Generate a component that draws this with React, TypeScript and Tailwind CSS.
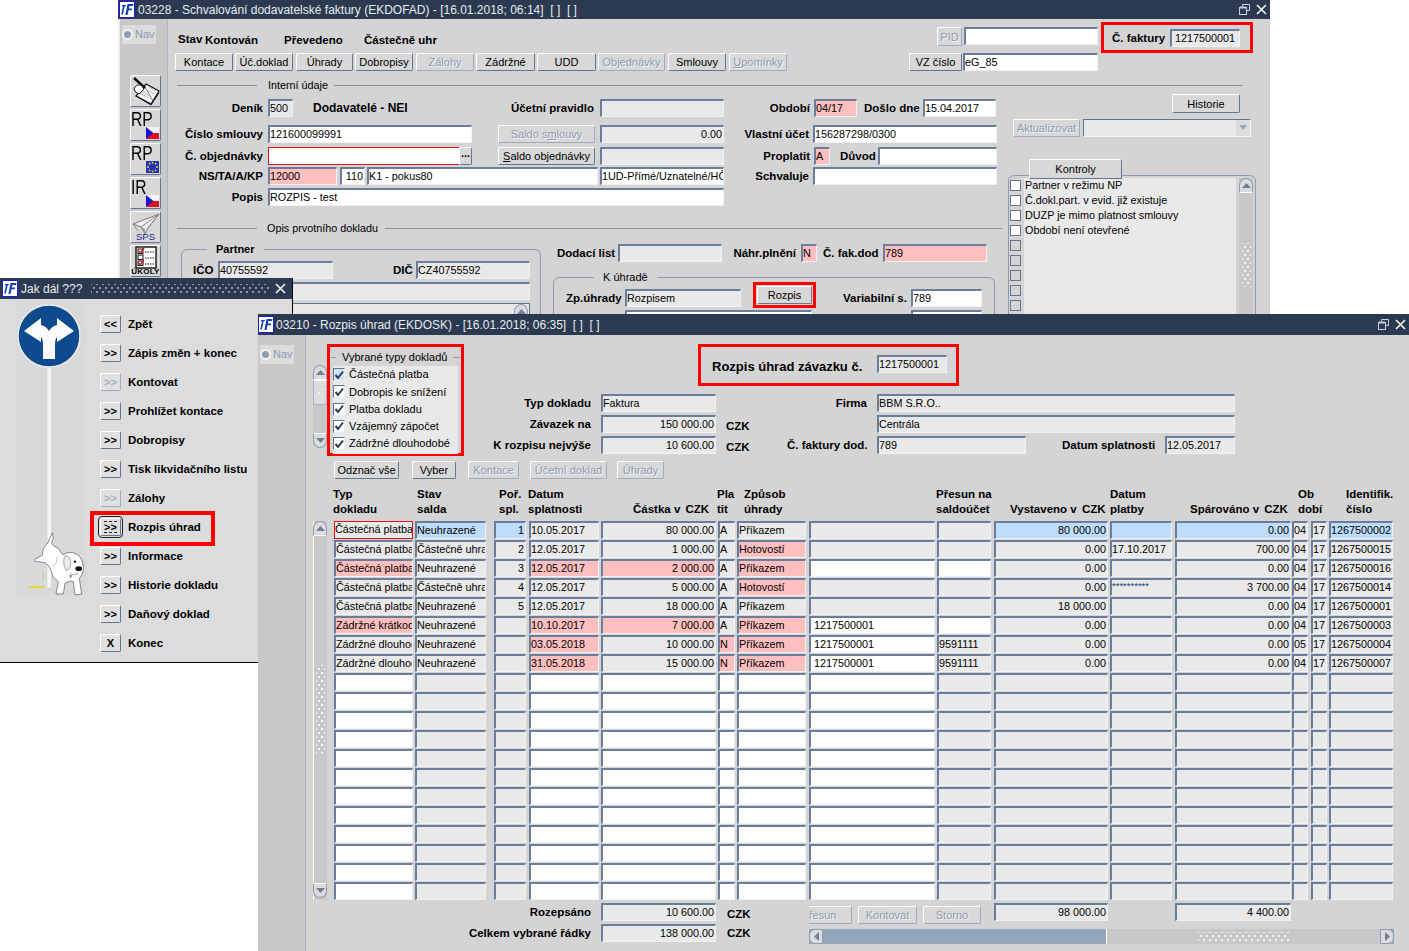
import React from "react";

const fieldBase =
  "shrink-0 h-[18px] overflow-hidden whitespace-nowrap border border-[#f2f2f2] border-t-2 border-l-2 border-t-[#6a7d9c] border-l-[#6a7d9c] pl-0 pr-[1px] text-[10.8px] leading-[15px] text-black";
const GREY = "bg-[#e9e9e9]";
const WHITE = "bg-white";
const PINK = "bg-[#ffbfbf]";
const BLUE = "bg-[#bedcfb]";

function F({ c, t, right }: { c: string; t?: string; right?: boolean }) {
  return <div className={`${fieldBase} ${c} ${right ? "text-right" : ""}`}>{t}</div>;
}

function B({ c, children, dis, h }: { c: string; children: React.ReactNode; dis?: boolean; h?: string }) {
  return (
    <div
      className={`shrink-0 ${h ?? "h-[18px]"} flex items-center justify-center overflow-hidden whitespace-nowrap rounded-[2px] border border-t-white border-l-white bg-[#d8d8d8] pt-[1px] text-[11px] ${
        dis
          ? "border-[#9fabbe] text-[#8c9bb2] [text-shadow:1px_1px_0_#f4f4f4]"
          : "border-[#66758f] text-black"
      } ${c}`}
    >
      {children}
    </div>
  );
}

function L({ c, children }: { c?: string; children: React.ReactNode }) {
  return <div className={`shrink-0 whitespace-nowrap text-[11.5px] font-bold leading-[14px] text-black ${c ?? ""}`}>{children}</div>;
}

function Logo() {
  return (
    <svg width="16" height="17" viewBox="0 0 16 17" className="shrink-0">
      <rect x="0.5" y="0.5" width="15" height="16" fill="#fff" stroke="#1c1ccc" />
      <path d="M3 4 H7 L6.7 5.2 H5.7 L3.9 13.5 H2.2 L4 5.2 H2.8Z" fill="#1a3fb0" />
      <path d="M8.5 3 H14.4 L14 5 H10.4 L9.9 7.4 H13.2 L12.8 9.3 H9.5 L8.6 14 H6.4Z" fill="#1a3fb0" />
    </svg>
  );
}

function Restore() {
  return (
    <svg width="11" height="11" viewBox="0 0 11 11" className="shrink-0">
      <path d="M3.5 2.5 V0.5 H10.5 V6.5 H8" fill="none" stroke="#c9d0da" />
      <rect x="0.5" y="3.5" width="7" height="7" fill="none" stroke="#c9d0da" />
      <path d="M1 3.5 H7" stroke="#c9d0da" strokeWidth="2" />
    </svg>
  );
}

function Close() {
  return (
    <svg width="11" height="11" viewBox="0 0 11 11" className="shrink-0">
      <path d="M1 1 L10 10 M10 1 L1 10" stroke="#eef0f3" strokeWidth="1.7" />
    </svg>
  );
}

function Nav() {
  return (
    <div className="ml-[2px] mt-[6px] flex h-[19px] w-[34px] items-center gap-[2px] bg-[#dcdcdc] text-[11px] text-[#8c9bb2]">
      <div className="h-[11px] w-[11px] shrink-0 rounded-full border-2 border-[#f2f2f2] bg-[#8e9bb0]" />
      Nav
    </div>
  );
}

function Arrow({ up, c }: { up?: boolean; c: string }) {
  return (
    <div
      className={`flex h-[15px] w-[14px] shrink-0 items-center justify-center border border-[#8d9ab0] bg-[#dcdcdc] ${
        up ? "rounded-t-[7px] border-b-white" : "rounded-b-[7px] border-t-white"
      } ${c}`}
    >
      <svg width="9" height="5" viewBox="0 0 9 5">
        <path d={up ? "M0 5 L4.5 0 L9 5Z" : "M0 0 L4.5 5 L9 0Z"} fill="#6f7f99" />
      </svg>
    </div>
  );
}

function Dots({ c }: { c: string }) {
  return (
    <div
      className={`bg-[radial-gradient(circle,#f5f5f5_0.9px,transparent_1.1px),radial-gradient(circle,#f5f5f5_0.9px,transparent_1.1px)] bg-[length:6px_8px] bg-[position:0_0,3px_4px] ${c}`}
    />
  );
}

function Flag({ eu }: { eu?: boolean }) {
  return eu ? (
    <svg width="13" height="12" viewBox="0 0 13 12" className="absolute bottom-[1px] right-[1px]">
      <rect width="13" height="12" fill="#2233bb" />
      {[[6.5, 1.7], [9.5, 2.7], [11, 6], [9.5, 9.3], [6.5, 10.3], [3.5, 9.3], [2, 6], [3.5, 2.7]].map(([x, y], i) => (
        <circle key={i} cx={x} cy={y} r="0.9" fill="#ffe000" />
      ))}
    </svg>
  ) : (
    <svg width="13" height="12" viewBox="0 0 13 12" className="absolute bottom-[1px] right-[1px]">
      <rect width="13" height="6" fill="#f4f4f4" />
      <rect y="6" width="13" height="6" fill="#e01020" />
      <path d="M0 0 L7.5 6 L0 12Z" fill="#1818d0" />
    </svg>
  );
}

function ToolBtn({ children }: { children: React.ReactNode }) {
  return (
    <div className="relative h-[32px] w-[31px] shrink-0 overflow-hidden rounded-[2px] border border-[#66758f] border-t-white border-l-white bg-[#d8d8d8]">
      {children}
    </div>
  );
}

function RPText({ t }: { t: string }) {
  return <div className="absolute left-[0px] top-[-3px] origin-left scale-x-[0.78] text-[20px] leading-[24px] text-black">{t}</div>;
}

function Toolbar() {
  return (
    <div className="ml-[10px] mt-[31px] flex flex-col gap-[2px]">
      <ToolBtn>
        <svg width="29" height="30" viewBox="0 0 29 30">
          <path d="M5 20 L15 8 L28 15 L20 28Z" fill="#f7f7f7" stroke="#111" strokeWidth="1.2" />
          <path d="M7 21 L20 29 L28 17" fill="none" stroke="#111" />
          <path d="M14 11 L22 25" stroke="#777" />
          <path d="M9 17 L17 22 M11 15 L19 20 M18 11 L25 15 M16 14 L23 18" stroke="#aaa" strokeWidth="0.8" />
          <path d="M3 2 L14 12" stroke="#111" strokeWidth="2.6" />
          <path d="M3 13 Q5 8 10 9 L13 13 L8 18 Q4 17 3 13Z" fill="#fff" stroke="#111" />
        </svg>
      </ToolBtn>
      <ToolBtn>
        <RPText t="RP" />
        <Flag />
      </ToolBtn>
      <ToolBtn>
        <RPText t="RP" />
        <Flag eu />
      </ToolBtn>
      <ToolBtn>
        <RPText t="IR" />
        <Flag />
      </ToolBtn>
      <ToolBtn>
        <svg width="29" height="23" viewBox="0 0 29 23" className="absolute left-0 top-0">
          <path d="M28 2 L2 12 L10 15 L14 22 L17 16 Z" fill="#f0f0f0" stroke="#777" />
          <path d="M28 2 L10 15 M17 16 L28 2" stroke="#888" fill="none" />
          <path d="M10 15 L14 22 L14 17Z" fill="#9a9a9a" />
          <path d="M2 12 L7 19" stroke="#888" />
        </svg>
        <div className="absolute inset-x-0 bottom-[0px] text-center text-[9.5px] leading-[10px] text-[#1a2a9a]">SPS</div>
      </ToolBtn>
      <ToolBtn>
        <svg width="29" height="23" viewBox="0 0 29 23" className="absolute left-0 top-0">
          <rect x="5" y="1" width="20" height="21" fill="#fff" stroke="#111" strokeWidth="1.4" />
          {[3, 9, 15].map((y, i) => (
            <g key={y}>
              <rect x="7" y={y} width="5" height="4.5" fill="#fff" stroke="#111" />
              {i !== 1 && <path d={`M7.5 ${y + 2} L9.5 ${y + 4} L13 ${y - 1}`} stroke="#d01020" strokeWidth="1.4" fill="none" />}
              <path d={`M14 ${y + 3} H23`} stroke="#111" strokeDasharray="1.5 1" />
            </g>
          ))}
        </svg>
        <div className="absolute inset-x-0 bottom-[-1px] text-center text-[8px] font-bold leading-[10px] tracking-[0.2px] text-black">ÚKOLY</div>
      </ToolBtn>
    </div>
  );
}

function Legend({ c, children, bold }: { c: string; children: React.ReactNode; bold?: boolean }) {
  return (
    <div className={`absolute top-[-8px] whitespace-nowrap bg-[#d4d4d4] px-[9px] text-[11px] leading-[14px] ${bold ? "font-bold" : ""} ${c}`}>
      {children}
    </div>
  );
}

function Window1() {
  const kontroly = ["Partner v režimu NP", "Č.dokl.part. v evid. již existuje", "DUZP je mimo platnost smlouvy", "Období není otevřené", "", "", "", "", "", ""];
  const btns: [string, string, boolean?][] = [
    ["w-[58px]", "Kontace"],
    ["w-[58px] ml-[2px]", "Úč.doklad"],
    ["w-[57px] ml-[3px]", "Úhrady"],
    ["w-[58px] ml-[2px]", "Dobropisy"],
    ["w-[58px] ml-[3px]", "Zálohy", true],
    ["w-[59px] ml-[2px]", "Zádržné"],
    ["w-[59px] ml-[2px]", "UDD"],
    ["w-[67px] ml-[2px]", "Objednávky", true],
    ["w-[58px] ml-[3px]", "Smlouvy"],
  ];
  return (
    <section className="absolute left-[118px] top-0 z-0 flex h-[340px] w-[1152px] flex-col overflow-hidden bg-[#d4d4d4]">
      <header className="flex h-[19px] shrink-0 items-center bg-[#2b3a50] pl-[1px] text-[12px] text-[#e8ebef]">
        <Logo />
        <div className="ml-[3px] whitespace-pre">03228 - Schvalování dodavatelské faktury (EKDOFAD) - [16.01.2018; 06:14]  [ ]  [ ]</div>
        <div className="ml-auto mr-[3px] flex items-center gap-[6px]">
          <Restore />
          <Close />
        </div>
      </header>
      <div className="flex min-h-0 flex-1">
        <aside className="w-[50px] shrink-0 border-r border-r-[#aab3c2] border-l-2 border-l-[#eeeeee] bg-[#c8c8c8]">
          <Nav />
          <Toolbar />
        </aside>
        <main className="min-w-0 flex-1">
          {/* top row */}
          <div className="mt-[3px] flex h-[31px] items-start">
            <L c="ml-[10px] mt-[10px] w-[27px]">Stav</L>
            <L c="w-[79px] mt-[11px]">Kontován</L>
            <L c="w-[80px] mt-[11px]">Převedeno</L>
            <L c="w-[573px] mt-[11px]">Částečně uhr</L>
            <B c="w-[25px] mt-[5px]" dis h="h-[19px]">PID</B>
            <F c={`w-[134px] ml-[2px] mt-[5px] ${WHITE}`} />
            <div className="ml-[3px] flex h-[31px] w-[152px] items-center border-[3px] border-[#ff0000] pl-[8px]">
              <L c="w-[58px]">Č. faktury</L>
              <F c={`w-[70px] text-center ${GREY}`} t="1217500001" />
            </div>
          </div>
          {/* button row */}
          <div className="flex h-[18px] pl-[7px]">
            {btns.map(([c, t, d]) => (
              <B key={t} c={c} dis={d}>{t}</B>
            ))}
            <B c="w-[58px] ml-[3px]" dis><span><u>U</u>pomínky</span></B>
            <B c="w-[53px] ml-[122px]">VZ číslo</B>
            <F c={`w-[135px] ml-[1px] ${WHITE}`} t="eG_85" />
          </div>
          {/* Interní údaje */}
          <div className="mt-[7px] flex h-[14px] items-center">
            <div className="ml-[9px] h-0 w-[80px] border-t border-[#8a8f98]" />
            <div className="w-[77px] pl-[11px] text-[10.8px] whitespace-nowrap">Interní údaje</div>
            <div className="h-0 w-[909px] border-t border-[#8a8f98]" />
          </div>
          <div className="flex">
            {/* left part */}
            <div className="w-[840px] shrink-0">
              <div className="mt-[6px] flex h-[19px] items-center">
                <L c="w-[95px] text-right">Deník</L>
                <F c={`ml-[5px] w-[25px] ${GREY}`} t="500" />
                <L c="ml-[20px] w-[100px] !text-[12px]">Dodavatelé - NEI</L>
                <L c="w-[181px] text-right">Účetní pravidlo</L>
                <F c={`ml-[6px] w-[124px] ${GREY}`} />
                <L c="w-[86px] text-right">Období</L>
                <F c={`ml-[4px] w-[43px] ${PINK}`} t="04/17" />
                <L c="ml-[7px] w-[59px]">Došlo dne</L>
                <F c={`w-[73px] ${WHITE}`} t="15.04.2017" />
              </div>
              <div className="mt-[7px] flex h-[19px] items-center">
                <L c="w-[95px] text-right">Číslo smlouvy</L>
                <F c={`ml-[5px] w-[204px] ${WHITE}`} t="121600099991" />
                <B c="ml-[26px] w-[97px]" dis><span>Saldo s<u>m</u>louvy</span></B>
                <F c={`ml-[5px] w-[124px] ${GREY}`} t="0.00" right />
                <L c="w-[85px] text-right">Vlastní účet</L>
                <F c={`ml-[4px] w-[184px] ${WHITE}`} t="156287298/0300" />
              </div>
              <div className="mt-[3px] flex h-[19px] items-center">
                <L c="w-[95px] text-right">Č. objednávky</L>
                <div className={`ml-[5px] h-[18px] w-[191px] shrink-0 border border-r-0 border-[#dd1111] ${WHITE}`} />
                <B c="w-[13px] !pt-0"><span className="-mt-[5px] font-bold">...</span></B>
                <B c="ml-[26px] w-[97px]"><span><u>S</u>aldo objednávky</span></B>
                <F c={`ml-[5px] w-[124px] ${GREY}`} />
                <L c="w-[86px] text-right">Proplatit</L>
                <F c={`ml-[4px] w-[16px] ${PINK}`} t="A" />
                <L c="ml-[10px] w-[38px]">Důvod</L>
                <F c={`w-[119px] ${WHITE}`} />
              </div>
              <div className="mt-[1px] flex h-[19px] items-center">
                <L c="w-[95px] text-right">NS/TA/A/KP</L>
                <F c={`ml-[5px] w-[69px] ${PINK}`} t="12000" />
                <F c={`ml-[3px] w-[25px] ${WHITE} text-right`} t="110" />
                <F c={`ml-[2px] w-[231px] ${WHITE}`} t="K1 - pokus80" />
                <F c={`ml-[2px] w-[124px] ${WHITE}`} t="1UD-Přímé/Uznatelné/HČ-" />
                <L c="w-[85px] text-right">Schvaluje</L>
                <F c={`ml-[4px] w-[184px] ${WHITE}`} />
              </div>
              <div className="mt-[3px] flex h-[18px] items-center">
                <L c="w-[95px] text-right">Popis</L>
                <F c={`ml-[5px] w-[456px] ${WHITE}`} t="ROZPIS - test" />
              </div>
              {/* Opis */}
              <div className="mt-[13px] flex h-[18px] items-center">
                <div className="ml-[9px] h-0 w-[80px] border-t border-[#8a8f98]" />
                <div className="w-[128px] pl-[10px] text-[10.8px] whitespace-nowrap">Opis prvotního dokladu</div>
                <div className="h-0 w-[617px] border-t border-[#8a8f98]" />
              </div>
              <div className="flex items-start">
                <div className="relative ml-[13px] mt-[12px] h-[90px] w-[360px] shrink-0 rounded-t-[6px] border border-[#8e9ab0] pt-[11px]">
                  <Legend c="left-[25px]" bold>Partner</Legend>
                  <div className="flex items-center">
                    <L c="ml-[11px] w-[25px]">IČO</L>
                    <F c={`w-[115px] ${GREY}`} t="40755592" />
                    <L c="ml-[60px] w-[23px]">DIČ</L>
                    <F c={`w-[114px] ${GREY}`} t="CZ40755592" />
                  </div>
                  <F c={`ml-[36px] mt-[3px] w-[312px] ${GREY}`} />
                  <div className="ml-[36px] mt-[3px] flex w-[312px] justify-end border border-[#64748f] bg-[#e9e9e9] pr-[1px]">
                    <Arrow up c="" />
                  </div>
                </div>
                <div className="ml-[12px] w-[442px] shrink-0">
                  <div className="ml-[4px] mt-[7px] flex h-[18px] items-center">
                    <L c="w-[61px]">Dodací list</L>
                    <F c={`w-[104px] ${GREY}`} />
                    <L c="w-[74px] text-right">Náhr.plnění</L>
                    <F c={`ml-[5px] w-[16px] ${PINK}`} t="N" />
                    <L c="ml-[6px] w-[60px]">Č. fak.dod</L>
                    <F c={`w-[104px] ${PINK}`} t="789" />
                  </div>
                  <div className="relative mt-[15px] h-[70px] rounded-t-[6px] border border-[#8e9ab0] pt-[4px]">
                    <Legend c="left-[40px]">K úhradě</Legend>
                    <div className="flex h-[26px] items-start">
                      <L c="ml-[12px] mt-[9px] w-[59px]">Zp.úhrady</L>
                      <F c={`mt-[7px] w-[116px] ${GREY}`} t="Rozpisem" />
                      <div className="ml-[12px] flex h-[26px] w-[63px] shrink-0 items-center justify-center border-[3px] border-[#ff0000]">
                        <B c="w-[55px]">Rozpis</B>
                      </div>
                      <L c="ml-[27px] mt-[9px] w-[68px]">Variabilní s.</L>
                      <F c={`mt-[7px] w-[71px] ${WHITE}`} t="789" />
                    </div>
                    <div className="mt-[2px] flex">
                      <F c={`ml-[71px] w-[187px] ${WHITE}`} />
                      <F c={`ml-[99px] w-[71px] ${WHITE}`} />
                    </div>
                  </div>
                </div>
              </div>
            </div>
            {/* right part */}
            <div className="w-[248px] shrink-0">
              <B c="ml-[164px] w-[68px] mt-[2px]" h="h-[19px]">Historie</B>
              <div className="mt-[5px] flex h-[19px] items-center">
                <B c="ml-[5px] w-[67px]" dis>Aktualizovat</B>
                <div className={`ml-[3px] flex h-[18px] w-[168px] shrink-0 justify-end border border-[#f6f6f6] border-t-[#64748f] border-l-[#64748f] ${GREY}`}>
                  <div className="flex w-[14px] items-center justify-center bg-[#dcdcdc]">
                    <svg width="8" height="5" viewBox="0 0 8 5"><path d="M0 0 L4 5 L8 0Z" fill="#9aa6b8" /></svg>
                  </div>
                </div>
              </div>
              <div className="relative z-10 ml-[21px] mt-[22px] flex h-[20px] w-[93px] items-center justify-center rounded-t-[2px] border border-[#66758f] border-t-white border-l-white bg-[#d8d8d8] pt-[1px] text-[11px]">
                Kontroly
              </div>
              <div className="-mt-[4px] flex h-[180px] rounded-t-[6px] border border-[#8e9ab0] pt-[2px]">
                <div className="w-[227px] shrink-0">
                  {kontroly.map((t, i) => (
                    <div key={i} className="flex h-[15px]">
                      <div className="flex w-[15px] shrink-0 items-center pl-[1px]">
                        <div className={`h-[11px] w-[11px] border border-[#64748f] ${t ? "bg-white" : ""}`} />
                      </div>
                      <div className="flex-1 bg-[#e9e9e9] pl-[1px] text-[10.8px] leading-[15px] whitespace-nowrap">{t}</div>
                    </div>
                  ))}
                </div>
                <div className="ml-[3px] flex w-[14px] flex-col bg-[#c8c8c8]">
                  <Arrow up c="" />
                  <Dots c="ml-[3px] mt-[50px] h-[44px] w-[9px]" />
                </div>
              </div>
            </div>
          </div>
        </main>
      </div>
    </section>
  );
}

function Sign() {
  return (
    <svg width="90" height="300" viewBox="0 0 90 300" className="shrink-0">
      <rect x="15" y="2" width="71" height="294" fill="#d9d9d9" />
      <circle cx="49" cy="37" r="31" fill="#0d4a8e" stroke="#ececec" strokeWidth="1.5" />
      <path
        transform="translate(18 6)"
        d="M25 54 V40 Q25 34 23 32 L23 37 L6 26 L23 13 L23 20 Q28 21 31 26 Q34 21 39 20 L39 13 L56 26 L39 37 L39 32 Q37 34 37 40 V54 Z"
        fill="#fbfbfb"
      />
      <rect x="47" y="68" width="4.5" height="221" fill="#f6f6f6" stroke="#cfcfcf" strokeWidth="0.6" />
      {/* dog, drawn in 3x crop coordinates */}
      <g transform="translate(20 221) scale(0.3333)">
        <ellipse cx="50" cy="201" rx="26" ry="3.5" fill="#e8d830" />
        <path d="M68 180 Q72 165 68 155" stroke="#c9c060" strokeWidth="2" fill="none" />
        <path
          d="M98 38 Q88 55 82 72 Q65 85 68 105 L45 118 Q42 126 52 125 L75 128 Q88 135 92 150 L100 172 L115 185 L108 222 L130 222 L135 190 Q150 180 160 185 L165 225 L185 222 L178 175 Q192 160 190 138 Q186 105 160 98 Q140 95 130 105 Q120 95 115 85 Q100 80 95 70 Q102 55 98 38Z"
          fill="#fdfdfd"
          stroke="#555"
          strokeWidth="2"
        />
        <path d="M135 108 Q125 130 140 152 Q154 146 152 122 Q149 106 135 108Z" fill="#ececec" stroke="#666" strokeWidth="1.6" />
        <ellipse cx="176" cy="146" rx="10" ry="7" fill="#111" />
        <circle cx="165" cy="125" r="3.5" fill="#111" />
        <path d="M152 160 Q160 170 176 158" stroke="#444" strokeWidth="1.6" fill="none" />
        <path d="M148 165 L152 176 L156 166Z" fill="#c0504d" />
        <path d="M100 140 Q112 130 112 110" stroke="#888" strokeWidth="1.4" fill="none" />
      </g>
    </svg>
  );
}

function Window3() {
  const items: [string, string, boolean?, boolean?][] = [
    ["<<", "Zpět"],
    [">>", "Zápis změn + konec"],
    [">>", "Kontovat", true],
    [">>", "Prohlížet kontace"],
    [">>", "Dobropisy"],
    [">>", "Tisk likvidačního listu"],
    [">>", "Zálohy", true],
    [">>", "Rozpis úhrad", false, true],
    [">>", "Informace"],
    [">>", "Historie dokladu"],
    [">>", "Daňový doklad"],
    ["X", "Konec"],
  ];
  return (
    <section className="absolute left-0 top-[278px] z-10 flex h-[385px] w-[293px] flex-col border-r border-b border-black bg-[#dcdcdc]">
      <header className="flex h-[21px] shrink-0 items-center bg-[#2b3a50] pl-[2px] text-[12px] text-[#e8ebef]">
        <Logo />
        <div className="ml-[3px] whitespace-nowrap">Jak dál ???</div>
        <Dots c="ml-[9px] h-[10px] w-[179px] opacity-50" />
        <div className="ml-[5px]"><Close /></div>
      </header>
      <div className="flex min-h-0 flex-1">
        <Sign />
        <div className="ml-[10px] flex flex-col pt-[16px]">
          {items.map(([s, t, d, f]) => (
            <div key={t} className="relative flex h-[29px] shrink-0 items-start">
              {f && <div className="absolute left-[-10px] top-[-7px] h-[35px] w-[125px] border-[4px] border-[#ff0000]" />}
              <div
                className={`flex h-[18px] w-[21px] shrink-0 items-center justify-center rounded-[2px] border border-t-white border-l-white bg-[#e0e0e0] text-[11px] font-bold ${
                  d ? "border-[#9fabbe] text-[#a4b0c2]" : "border-[#66758f] text-black"
                } ${f ? "outline outline-1 outline-offset-1 outline-[#222]" : ""}`}
              >
                {f ? <span className="border-y border-dashed border-[#222] leading-[10px]">{s}</span> : s}
              </div>
              <div className="ml-[7px] whitespace-nowrap text-[11.5px] font-bold leading-[18px] text-black">{t}</div>
            </div>
          ))}
        </div>
      </div>
    </section>
  );
}

const COLS = [
  "w-[79px]",
  "ml-[2px] w-[71px]",
  "ml-[8px] w-[32px] text-right",
  "ml-[3px] w-[70px]",
  "ml-[2px] w-[115px] text-right",
  "ml-[2px] w-[17px]",
  "ml-[2px] w-[69px]",
  "ml-[3px] w-[126px] !pl-[3px]",
  "ml-[2px] w-[54px]",
  "ml-[3px] w-[114px] text-right",
  "ml-[2px] w-[62px]",
  "ml-[3px] w-[116px] text-right",
  "ml-[1px] w-[16px]",
  "ml-[3px] w-[16px]",
  "ml-[2px] w-[64px]",
];

type Row = { t: string[]; bg: string[] };
const G = GREY, W = WHITE, P = PINK, U = BLUE;
const ROWS: Row[] = [
  {
    t: ["Částečná platba", "Neuhrazené", "1", "10.05.2017", "80 000.00", "A", "Příkazem", "", "", "80 000.00", "", "0.00", "04", "17", "1267500002"],
    bg: [G, U, U, G, G, G, G, G, G, U, U, U, G, G, U],
  },
  {
    t: ["Částečná platba", "Částečně uhrazené", "2", "12.05.2017", "1 000.00", "A", "Hotovostí", "", "", "0.00", "17.10.2017", "700.00", "04", "17", "1267500015"],
    bg: [G, G, G, G, G, G, P, G, G, G, G, G, G, G, G],
  },
  {
    t: ["Částečná platba", "Neuhrazené", "3", "12.05.2017", "2 000.00", "A", "Příkazem", "", "", "0.00", "", "0.00", "04", "17", "1267500016"],
    bg: [P, G, G, P, P, G, P, W, W, G, G, G, G, G, G],
  },
  {
    t: ["Částečná platba", "Částečně uhrazené", "4", "12.05.2017", "5 000.00", "A", "Hotovostí", "", "", "0.00", "**********", "3 700.00", "04", "17", "1267500014"],
    bg: [G, G, G, G, G, G, P, G, G, G, G, G, G, G, G],
  },
  {
    t: ["Částečná platba", "Neuhrazené", "5", "12.05.2017", "18 000.00", "A", "Příkazem", "", "", "18 000.00", "", "0.00", "04", "17", "1267500001"],
    bg: [G, G, G, G, G, G, G, G, G, G, G, G, G, G, G],
  },
  {
    t: ["Zádržné krátkodobé", "Neuhrazené", "", "10.10.2017", "7 000.00", "A", "Příkazem", "1217500001", "", "0.00", "", "0.00", "04", "17", "1267500003"],
    bg: [P, G, G, P, P, G, P, W, W, G, G, G, G, G, G],
  },
  {
    t: ["Zádržné dlouhodobé", "Neuhrazené", "", "03.05.2018", "10 000.00", "N", "Příkazem", "1217500001", "9591111", "0.00", "", "0.00", "05", "17", "1267500004"],
    bg: [G, G, G, P, G, P, P, W, G, G, G, G, G, G, G],
  },
  {
    t: ["Zádržné dlouhodobé", "Neuhrazené", "", "31.05.2018", "15 000.00", "N", "Příkazem", "1217500001", "9591111", "0.00", "", "0.00", "04", "17", "1267500007"],
    bg: [G, G, G, P, G, P, P, W, G, G, G, G, G, G, G],
  },
];
const BLANK: Row = {
  t: Array(15).fill(""),
  bg: [W, G, G, W, W, W, W, W, G, G, G, G, G, G, G],
};
const ALL_ROWS: Row[] = [...ROWS, ...Array(12).fill(BLANK)];

function Check({ first }: { first?: boolean }) {
  return (
    <div className={`flex h-[13px] w-[12px] shrink-0 items-center justify-center border border-[#e8eef8] border-t-[#64748f] border-l-[#64748f] ${first ? "bg-[#cfe4fb]" : "bg-white"}`}>
      <svg width="10" height="10" viewBox="0 0 10 10">
        <path d="M1.5 5 L4 8 L9 1.5" fill="none" stroke="#2b3a55" strokeWidth="2" />
      </svg>
    </div>
  );
}

function H({ c, a, b }: { c: string; a: string; b: React.ReactNode }) {
  return (
    <div className={`shrink-0 text-[11.5px] font-bold leading-[15px] whitespace-nowrap ${c}`}>
      <div className="h-[15px]">{a}</div>
      <div className="h-[15px]">{b}</div>
    </div>
  );
}

function Window2() {
  return (
    <section className="absolute left-[258px] top-[314px] z-20 flex h-[637px] w-[1151px] flex-col bg-[#d4d4d4]">
      <header className="flex h-[21px] shrink-0 items-center bg-[#2b3a50] text-[12px] text-[#e8ebef]">
        <Logo />
        <div className="ml-[2px] whitespace-pre">03210 - Rozpis úhrad (EKDOSK) - [16.01.2018; 06:35]  [ ]  [ ]</div>
        <div className="ml-auto mr-[3px] flex items-center gap-[6px]">
          <Restore />
          <Close />
        </div>
      </header>
      <div className="flex min-h-0 flex-1">
        <aside className="w-[48px] shrink-0 border-r border-[#aab3c2] bg-[#c8c8c8] pt-[4px]">
          <Nav />
        </aside>
        <main className="min-w-0 flex-1">
          {/* top block */}
          <div className="flex pt-[9px]">
            <div className="ml-[7px] mt-[21px] flex w-[14px] shrink-0 flex-col">
              <Arrow up c="" />
              <div className="flex h-[25px] items-center justify-center border border-[#a8b2c2] border-t-white bg-[#dcdcdc]">
                <Dots c="h-[8px] w-[8px]" />
              </div>
              <div className="h-[28px] bg-[#c8c8c8]" />
              <Arrow c="" />
            </div>
            <div className="h-[112px] w-[137px] shrink-0 border-[3px] border-[#ff0000]">
              <div className="relative mx-[1px] mt-[10px] border-t border-[#8e9ab0] pt-[8px]">
                <Legend c="left-[5px] !px-[6px]">Vybrané typy dokladů</Legend>
                <div className="mx-[2px] bg-[#e9e9e9] pb-[2px]">
                  {["Částečná platba", "Dobropis ke snížení", "Platba dokladu", "Vzájemný zápočet", "Zádržné dlouhodobé"].map((t, i) => (
                    <div key={t} className="flex h-[17.25px] items-center">
                      <Check first={i === 0} />
                      <div className="ml-[4px] whitespace-nowrap text-[11px]">{t}</div>
                    </div>
                  ))}
                </div>
              </div>
            </div>
            <div className="min-w-0">
              <div className="ml-[234px] flex h-[42px] w-[261px] items-center border-[3px] border-[#ff0000] pl-[11px]">
                <div className="mt-[4px] w-[165px] shrink-0 text-[13px] font-bold whitespace-nowrap">Rozpis úhrad závazku č.</div>
                <F c={`w-[70px] ${GREY} -mt-[3px]`} t="1217500001" />
              </div>
              <div className="mt-[8px] flex h-[18px] items-center">
                <L c="w-[127px] text-right">Typ dokladu</L>
                <F c={`ml-[10px] w-[115px] ${GREY}`} t="Faktura" />
                <L c="w-[151px] text-right">Firma</L>
                <F c={`ml-[10px] w-[358px] ${GREY}`} t="BBM S.R.O.." />
              </div>
              <div className="mt-[3px] flex h-[18px] items-center">
                <L c="w-[127px] text-right">Závazek na</L>
                <F c={`ml-[10px] w-[115px] ${GREY}`} t="150 000.00" right />
                <L c="ml-[10px] w-[141px] mt-[4px]">CZK</L>
                <F c={`ml-[10px] w-[358px] ${GREY}`} t="Centrála" />
              </div>
              <div className="mt-[3px] flex h-[18px] items-center">
                <L c="w-[127px] text-right">K rozpisu nejvýše</L>
                <F c={`ml-[10px] w-[115px] ${GREY}`} t="10 600.00" right />
                <L c="ml-[10px] w-[61px] mt-[4px]">CZK</L>
                <L c="w-[80px] text-right">Č. faktury dod.</L>
                <F c={`ml-[10px] w-[149px] ${GREY}`} t="789" />
                <L c="ml-[36px] w-[103px]">Datum splatnosti</L>
                <F c={`w-[70px] ${GREY}`} t="12.05.2017" />
              </div>
            </div>
          </div>
          {/* button row */}
          <div className="mt-[5px] flex h-[18px] pl-[28px]">
            <B c="w-[65px]">Odznač vše</B>
            <B c="ml-[13px] w-[44px]">Vyber</B>
            <B c="ml-[12px] w-[51px]" dis>Kontace</B>
            <B c="ml-[11px] w-[77px]" dis>Účetní doklad</B>
            <B c="ml-[10px] w-[47px]" dis>Úhrady</B>
          </div>
          {/* header */}
          <div className="mt-[8px] flex h-[30px] pl-[27px]">
            <H c="w-[84px]" a="Typ" b="dokladu" />
            <H c="w-[82px]" a="Stav" b="salda" />
            <H c="w-[29px]" a="Poř." b="spl." />
            <H c="w-[105px]" a="Datum" b="splatnosti" />
            <H c="w-[84px]" a="" b={<span>Částka v <span className="ml-[2px]">CZK</span></span>} />
            <H c="w-[27px]" a="Pla" b="tit" />
            <H c="w-[192px]" a="Způsob" b="úhrady" />
            <H c="w-[74px]" a="Přesun na" b="saldoúčet" />
            <H c="w-[100px]" a="" b={<span>Vystaveno v <span className="ml-[2px]">CZK</span></span>} />
            <H c="w-[80px]" a="Datum" b="platby" />
            <H c="w-[108px]" a="" b={<span>Spárováno v <span className="ml-[2px]">CZK</span></span>} />
            <H c="w-[48px]" a="Ob" b="dobí" />
            <H c="w-[50px]" a="Identifik." b="číslo" />
          </div>
          {/* table */}
          <div className="mt-[4px] flex">
            <div className="ml-[7px] flex w-[14px] shrink-0 flex-col border-l border-l-white bg-[#c8c8c8]">
              <Arrow up c="-ml-px" />
              <div className="flex h-[347px] items-center justify-center">
                <Dots c="h-[90px] w-[9px]" />
              </div>
              <Arrow c="-ml-px" />
            </div>
            <div className="ml-[7px] flex flex-col gap-[1px]">
              {ALL_ROWS.map((r, i) => (
                <div key={i} className="flex h-[18px]">
                  {r.t.map((t, j) => (
                    <div
                      key={j}
                      className={`${fieldBase} ${COLS[j]} ${r.bg[j]} ${t === "**********" ? "!text-[9.5px] !leading-[11px] !text-[#24407a]" : ""} ${
                        i === 0 && j === 0 ? "!border-[#e01010] !border-t !border-l" : ""
                      }`}
                    >
                      {t}
                    </div>
                  ))}
                </div>
              ))}
            </div>
          </div>
          {/* bottom */}
          <div className="mt-[3px] flex h-[18px] items-center">
            <L c="w-[285px] text-right">Rozepsáno</L>
            <F c={`ml-[10px] w-[115px] ${GREY}`} t="10 600.00" right />
            <L c="ml-[11px] w-[82px] mt-[4px]">CZK</L>
            <div className="flex w-[43px] shrink-0 justify-end overflow-hidden">
              <B c="w-[66px] mt-[5px]" dis>Přesun</B>
            </div>
            <B c="ml-[6px] w-[59px] mt-[5px]" dis>Kontovat</B>
            <B c="ml-[6px] w-[58px] mt-[5px]" dis>Storno</B>
            <F c={`ml-[13px] w-[114px] ${GREY}`} t="98 000.00" right />
            <F c={`ml-[67px] w-[116px] ${GREY}`} t="4 400.00" right />
          </div>
          <div className="mt-[3px] flex h-[18px] items-center">
            <L c="w-[285px] text-right">Celkem vybrané řádky</L>
            <F c={`ml-[10px] w-[115px] ${GREY}`} t="138 000.00" right />
            <L c="ml-[11px] w-[82px]">CZK</L>
            <div className="mt-[6px] flex h-[15px] w-[585px] shrink-0 items-stretch bg-[#95a5ba]">
              <div className="flex w-[14px] items-center justify-center rounded-l-[6px] border border-[#8d9ab0] bg-[#dcdcdc]">
                <svg width="5" height="9" viewBox="0 0 5 9"><path d="M5 0 L0 4.5 L5 9Z" fill="#6f7f99" /></svg>
              </div>
              <div className="w-[283px]" />
              <div className="flex w-[274px] items-center justify-center border-l border-white bg-[#c8c8c8]">
                <Dots c="h-[9px] w-[92px]" />
              </div>
              <div className="flex w-[14px] items-center justify-center rounded-r-[6px] border border-[#8d9ab0] bg-[#dcdcdc]">
                <svg width="5" height="9" viewBox="0 0 5 9"><path d="M0 0 L5 4.5 L0 9Z" fill="#6f7f99" /></svg>
              </div>
            </div>
          </div>
        </main>
      </div>
    </section>
  );
}

export default function App() {
  return (
    <div className="relative h-[951px] w-[1409px] overflow-hidden bg-white font-['Liberation_Sans',Arial,sans-serif] text-black">
      <Window1 />
      <Window3 />
      <Window2 />
    </div>
  );
}
